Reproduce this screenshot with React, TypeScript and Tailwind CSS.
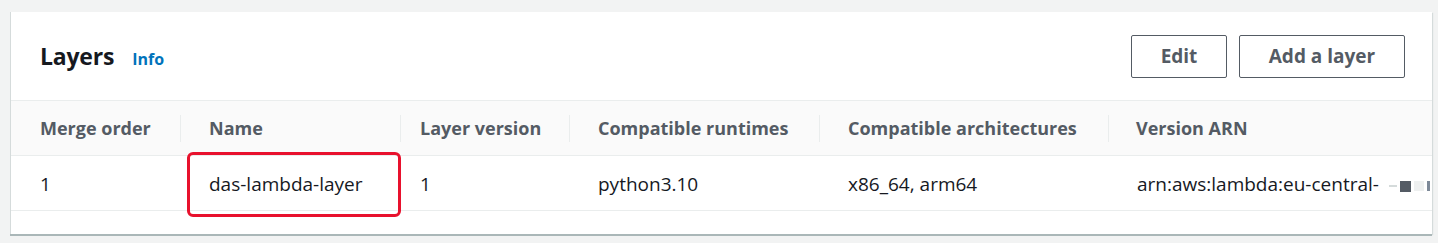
const columns = [
  { title: 'Merge order', value: '1', pad: 'pl-[29px]' },
  { title: 'Name', value: 'das-lambda-layer', highlight: true, pad: 'pl-[28px]' },
  { title: 'Layer version', value: '1', pad: 'pl-[19px]' },
  { title: 'Compatible runtimes', value: 'python3.10', pad: 'pl-[28px]' },
  { title: 'Compatible architectures', value: 'x86_64, arm64', pad: 'pl-[28px]' },
  { title: 'Version ARN', value: 'arn:aws:lambda:eu-central-', redacted: true, pad: 'pl-[27px]' },
];

const gridCols = 'grid grid-cols-[169px_220px_169px_250px_289px_1fr]';

export default function App() {
  return (
    <div
      className="h-[243px] w-[1438px] bg-[#f2f3f3] pt-[12px] pl-[10px] pr-[6px] overflow-hidden"
      style={{ fontFamily: '"Open Sans", "Liberation Sans", sans-serif' }}
    >
      <div className="h-[222px] bg-white border-l border-[#d5dbdb] shadow-[0_2px_0_0_#aab7b8,1px_1px_1px_0_#d5dbdb] overflow-hidden">
        {/* Container header */}
        <div className="h-[88px] flex items-center justify-between pl-[29px] pr-[27px] pt-[1px]">
          <div className="flex items-baseline gap-[18px]">
            <h2 className="text-[23px] font-bold text-[#16191f] tracking-[-0.2px]">Layers</h2>
            <a className="text-[16px] font-bold text-[#0073bb]">Info</a>
          </div>
          <div className="flex gap-[12px]">
            <button className="h-[43px] w-[96px] border border-[#545b64] rounded-[2px] text-[19px] font-bold text-[#545b64] bg-white">
              Edit
            </button>
            <button className="h-[43px] w-[166px] border border-[#545b64] rounded-[2px] text-[19px] font-bold text-[#545b64] bg-white">
              Add a layer
            </button>
          </div>
        </div>

        {/* Table header */}
        <div className={`${gridCols} h-[56px] bg-[#fafafa] border-y border-[#eaeded]`}>
          {columns.map((c, i) => (
            <div key={c.title} className="flex items-center">
              <div
                className={`h-[27px] flex items-center text-[18px] font-bold text-[#545b64] whitespace-nowrap ${c.pad} ${
                  i === 0 ? '' : 'border-l border-[#eaeded]'
                }`}
              >
                {c.title}
              </div>
            </div>
          ))}
        </div>

        {/* Data row */}
        <div className={`${gridCols} h-[55px] border-b border-[#eaeded]`}>
          {columns.map((c, i) => (
            <div key={c.title} className="flex items-center text-[19px] text-[#16191f] whitespace-nowrap">
              {c.highlight ? (
                <div className="ml-[7px] -mr-[1px] -my-[4px] h-[65px] flex-1 flex items-center pl-[19px] border-[3px] border-[#e8112d] rounded-[6px]">
                  {c.value}
                </div>
              ) : (
                <div className={i === 2 ? 'pl-[20px]' : 'pl-[29px]'}>
                  {c.value}
                  {c.redacted && (
                    <span className="inline-flex items-center align-middle ml-[10px] gap-[3px]">
                      <span className="w-[8px] h-[2px] bg-[#d5dbdb]" />
                      <span className="w-[11px] h-[11px] bg-[#545b64]" />
                      <span className="w-[10px] h-[10px] bg-[#eef0f0]" />
                      <span className="w-[3px] h-[10px] bg-[#7d8998]" />
                    </span>
                  )}
                </div>
              )}
            </div>
          ))}
        </div>
      </div>
    </div>
  );
}
